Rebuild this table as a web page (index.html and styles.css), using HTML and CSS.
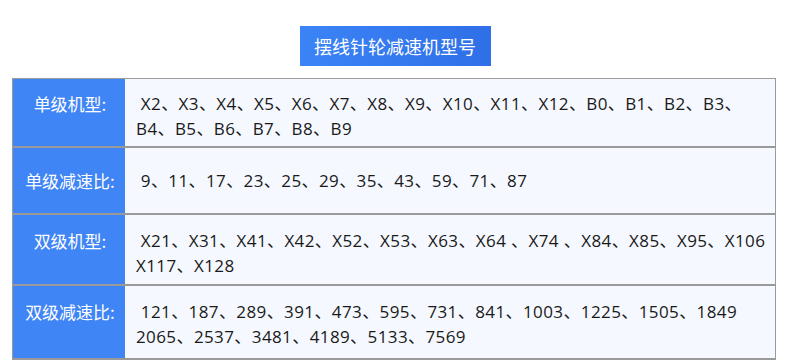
FILE: index.html
```html
<!DOCTYPE html>
<html lang="zh">
<head>
<meta charset="utf-8">
<link rel="stylesheet" href="styles.css">
</head>
<body>
<div class="page">
  <div class="title-wrap"><div class="title">摆线针轮减速机型号</div></div>
  <div class="table">
    <div class="row r1">
      <div class="label">单级机型:</div>
      <div class="value"> X2、X3、X4、X5、X6、X7、X8、X9、X10、X11、X12、B0、B1、B2、B3、<br>B4、B5、B6、B7、B8、B9</div>
    </div>
    <div class="row r2">
      <div class="label">单级减速比:</div>
      <div class="value">&nbsp;9、11、17、23、25、29、35、43、59、71、87</div>
    </div>
    <div class="row r3">
      <div class="label">双级机型:</div>
      <div class="value"> X21、X31、X41、X42、X52、X53、X63、X64 、X74 、X84、X85、X95、X106<br>X117、X128</div>
    </div>
    <div class="row r4">
      <div class="label">双级减速比:</div>
      <div class="value">&nbsp;121、187、289、391、473、595、731、841、1003、1225、1505、1849<br>2065、2537、3481、4189、5133、7569</div>
    </div>
  </div>
</div>
</body>
</html>
```
FILE: styles.css
```css
html, body {
  margin: 0;
  padding: 0;
  background: #ffffff;
}
body {
  font-family: "Noto Sans CJK SC", "Noto Sans", sans-serif;
  width: 790px;
  height: 364px;
  overflow: hidden;
}
.page {
  padding: 26px 14px 0 12px;
}
.title-wrap {
  display: flex;
  justify-content: center;
  padding-left: 2px;
}
.title {
  width: 191px;
  height: 40px;
  box-sizing: border-box;
  background: linear-gradient(90deg, #3b84f6 0%, #2f6fe7 100%);
  color: #ffffff;
  font-size: 18px;
  line-height: 40px;
  text-align: center;
}
.table {
  margin-top: 12px;
  border: 1px solid #9a9a9a;
  border-bottom-width: 2px;
}
.row {
  display: flex;
  border-top: 2px solid #9a9a9a;
  box-sizing: border-box;
}
.row.r1 { border-top: 0; height: 67px; }
.row.r2 { height: 67px; }
.row.r3 { height: 71px; }
.row.r4 { height: 74px; }
.label {
  width: 112px;
  flex: none;
  background: #4085f5;
  color: #ffffff;
  font-size: 17px;
  text-align: center;
  line-height: 25px;
  padding-left: 2px;
  box-sizing: border-box;
}
.value {
  flex: 1;
  background: #f5f8fe;
  color: #1a1a1a;
  font-family: "Open Sans", "Noto Sans CJK SC", sans-serif;
  font-size: 17px;
  letter-spacing: 0.4px;
  line-height: 25px;
  padding-left: 11px;
  white-space: pre;
}
.r1 .label, .r1 .value { padding-top: 12px; }
.r2 .label, .r2 .value { padding-top: 20px; }
.r3 .label, .r3 .value { padding-top: 13px; }
.r4 .label, .r4 .value { padding-top: 13px; }
```
